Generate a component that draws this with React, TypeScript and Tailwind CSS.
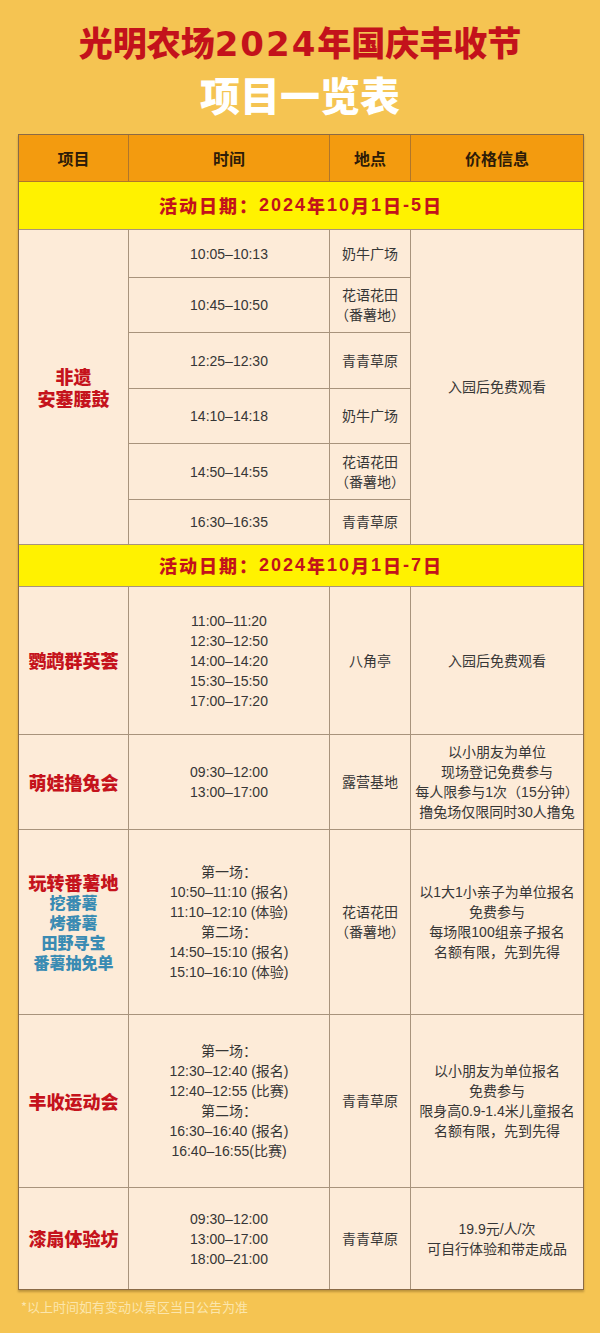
import React from "react";

const cell =
  "bg-[#fdebd8] flex flex-col items-center justify-center text-center text-[14px] leading-[20px] text-[#363636]";
const nameCell =
  "bg-[#fdebd8] flex flex-col items-center justify-center text-center font-['Noto_Sans_CJK_SC',sans-serif] font-black text-[18px] text-[#c5131c]";

function Lines({ items }: { items: string[] }) {
  return (
    <>
      {items.map((t, i) => (
        <div key={i} className="whitespace-nowrap">
          {t}
        </div>
      ))}
    </>
  );
}

export default function App() {
  return (
    <div className="min-h-[1333px] w-[600px] bg-[#f5c452] font-['Liberation_Sans','Noto_Sans_CJK_SC',sans-serif]">
      <div className="pt-[22px] text-center">
        <div className="font-['Noto_Sans_CJK_SC',sans-serif] font-black text-[34px] leading-[40px] text-[#c3121b]">
          光明农场
          <span className="font-['DejaVu_Sans','Noto_Sans_CJK_SC',sans-serif] font-bold text-[34px] tracking-[2px]">
            2024
          </span>
          年国庆丰收节
        </div>
        <div className="mt-[6px] font-['Noto_Sans_CJK_SC',sans-serif] font-black text-[40px] leading-[48px] text-white">
          项目一览表
        </div>
      </div>

      <div className="ml-[18px] mt-[16px] w-[566px] border border-[#8a6a46] shadow-[0_2px_2px_rgba(90,60,20,0.35)]">
        {/* header */}
        <div className="grid h-[47px] grid-cols-[109px_200px_80px_172px] gap-x-px border-b border-[#b0762a] bg-[#b0762a] font-['Noto_Sans_CJK_SC',sans-serif] text-[16px] font-bold text-[#2e1c08]">
          <div className="flex items-center justify-center bg-[#f39b0f]">项目</div>
          <div className="flex items-center justify-center bg-[#f39b0f]">时间</div>
          <div className="flex items-center justify-center bg-[#f39b0f]">地点</div>
          <div className="flex items-center justify-center bg-[#f39b0f]">价格信息</div>
        </div>

        {/* section 1 */}
        <div className="flex h-[48px] items-center justify-center border-b border-[#a8937c] bg-[#fff200] font-['Noto_Sans_CJK_SC',sans-serif] text-[18px] font-black tracking-[2px] text-[#c3121b]">
          活动日期：
          <span className="font-['Liberation_Sans',sans-serif] font-bold">2024</span>年
          <span className="font-['Liberation_Sans',sans-serif] font-bold">10</span>月
          <span className="font-['Liberation_Sans',sans-serif] font-bold">1</span>日
          <span className="font-['Liberation_Sans',sans-serif] font-bold">-5</span>日
        </div>

        <div className="grid grid-cols-[109px_200px_80px_172px] grid-rows-[47px_54px_55px_54px_55px_44px] gap-px bg-[#a8937c]">
          <div className={`${nameCell} row-span-6 leading-[22px]`}>
            <div>非遗</div>
            <div>安塞腰鼓</div>
          </div>
          <div className={cell}>10:05–10:13</div>
          <div className={cell}>奶牛广场</div>
          <div className={`${cell} row-span-6`}>入园后免费观看</div>

          <div className={cell}>10:45–10:50</div>
          <div className={cell}>
            <Lines items={["花语花田", "（番薯地）"]} />
          </div>

          <div className={cell}>12:25–12:30</div>
          <div className={cell}>青青草原</div>

          <div className={cell}>14:10–14:18</div>
          <div className={cell}>奶牛广场</div>

          <div className={cell}>14:50–14:55</div>
          <div className={cell}>
            <Lines items={["花语花田", "（番薯地）"]} />
          </div>

          <div className={cell}>16:30–16:35</div>
          <div className={cell}>青青草原</div>
        </div>

        {/* section 2 */}
        <div className="flex h-[43px] items-center justify-center border-y border-[#a8937c] bg-[#fff200] font-['Noto_Sans_CJK_SC',sans-serif] text-[18px] font-black tracking-[2px] text-[#c3121b]">
          活动日期：
          <span className="font-['Liberation_Sans',sans-serif] font-bold">2024</span>年
          <span className="font-['Liberation_Sans',sans-serif] font-bold">10</span>月
          <span className="font-['Liberation_Sans',sans-serif] font-bold">1</span>日
          <span className="font-['Liberation_Sans',sans-serif] font-bold">-7</span>日
        </div>

        <div className="grid grid-cols-[109px_200px_80px_172px] grid-rows-[147px_94px_184px_172px_101px] gap-px bg-[#a8937c]">
          {/* 鹦鹉群英荟 */}
          <div className={nameCell}>鹦鹉群英荟</div>
          <div className={cell}>
            <Lines
              items={[
                "11:00–11:20",
                "12:30–12:50",
                "14:00–14:20",
                "15:30–15:50",
                "17:00–17:20",
              ]}
            />
          </div>
          <div className={cell}>八角亭</div>
          <div className={cell}>入园后免费观看</div>

          {/* 萌娃撸兔会 */}
          <div className={nameCell}>萌娃撸兔会</div>
          <div className={cell}>
            <Lines items={["09:30–12:00", "13:00–17:00"]} />
          </div>
          <div className={cell}>露营基地</div>
          <div className={cell}>
            <Lines
              items={[
                "以小朋友为单位",
                "现场登记免费参与",
                "每人限参与1次（15分钟）",
                "撸兔场仅限同时30人撸兔",
              ]}
            />
          </div>

          {/* 玩转番薯地 */}
          <div className={`${nameCell} leading-[20px]`}>
            <div>玩转番薯地</div>
            <div className="text-[16px] text-[#3a8bb3]">挖番薯</div>
            <div className="text-[16px] text-[#3a8bb3]">烤番薯</div>
            <div className="text-[16px] text-[#3a8bb3]">田野寻宝</div>
            <div className="text-[16px] text-[#3a8bb3]">番薯抽免单</div>
          </div>
          <div className={cell}>
            <Lines
              items={[
                "第一场：",
                "10:50–11:10 (报名)",
                "11:10–12:10 (体验)",
                "第二场：",
                "14:50–15:10 (报名)",
                "15:10–16:10 (体验)",
              ]}
            />
          </div>
          <div className={cell}>
            <Lines items={["花语花田", "（番薯地）"]} />
          </div>
          <div className={cell}>
            <Lines
              items={[
                "以1大1小亲子为单位报名",
                "免费参与",
                "每场限100组亲子报名",
                "名额有限，先到先得",
              ]}
            />
          </div>

          {/* 丰收运动会 */}
          <div className={nameCell}>丰收运动会</div>
          <div className={cell}>
            <Lines
              items={[
                "第一场：",
                "12:30–12:40 (报名)",
                "12:40–12:55 (比赛)",
                "第二场：",
                "16:30–16:40 (报名)",
                "16:40–16:55(比赛)",
              ]}
            />
          </div>
          <div className={cell}>青青草原</div>
          <div className={cell}>
            <Lines
              items={[
                "以小朋友为单位报名",
                "免费参与",
                "限身高0.9-1.4米儿童报名",
                "名额有限，先到先得",
              ]}
            />
          </div>

          {/* 漆扇体验坊 */}
          <div className={nameCell}>漆扇体验坊</div>
          <div className={cell}>
            <Lines items={["09:30–12:00", "13:00–17:00", "18:00–21:00"]} />
          </div>
          <div className={cell}>青青草原</div>
          <div className={cell}>
            <Lines items={["19.9元/人/次", "可自行体验和带走成品"]} />
          </div>
        </div>
      </div>

      <div className="mt-[8px] pl-[21px] font-['Noto_Sans_CJK_SC',sans-serif] text-[13px] leading-[18px] text-[#fbe6ad]">
        *以上时间如有变动以景区当日公告为准
      </div>
    </div>
  );
}
